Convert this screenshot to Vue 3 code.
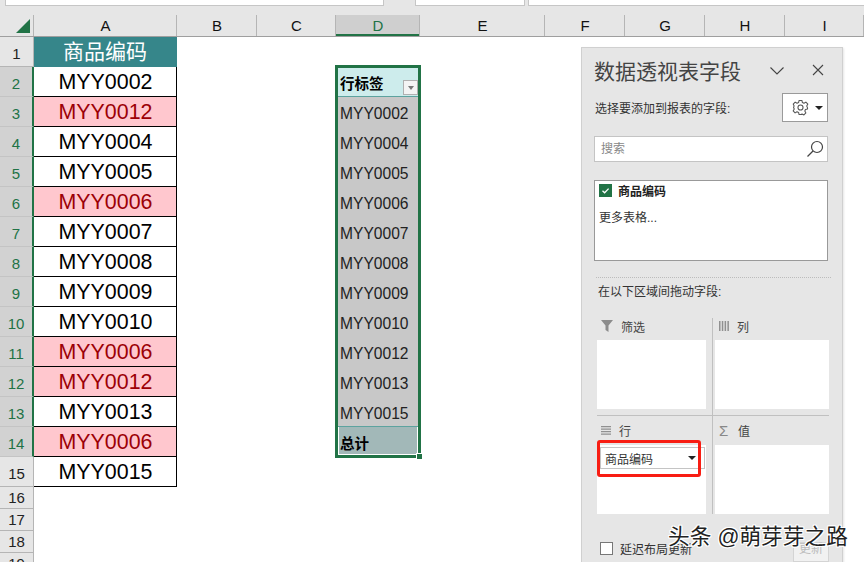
<script setup>
const columns = [
  { name: 'A', w: 143 }, { name: 'B', w: 80 }, { name: 'C', w: 79 }, { name: 'D', w: 84, active: true },
  { name: 'E', w: 125 }, { name: 'F', w: 80 }, { name: 'G', w: 80 }, { name: 'H', w: 80 }, { name: 'I', w: 79 }
]
const rowNumbers = Array.from({ length: 19 }, (_, i) => i + 1)
const codes = [
  ['MYY0002'], ['MYY0012', 1], ['MYY0004'], ['MYY0005'], ['MYY0006', 1], ['MYY0007'], ['MYY0008'],
  ['MYY0009'], ['MYY0010'], ['MYY0006', 1], ['MYY0012', 1], ['MYY0013'], ['MYY0006', 1], ['MYY0015']
]
const pivotRows = ['MYY0002', 'MYY0004', 'MYY0005', 'MYY0006', 'MYY0007', 'MYY0008', 'MYY0009', 'MYY0010', 'MYY0012', 'MYY0013', 'MYY0015']
</script>

<template>
  <div class="app">
    <div class="formula">
      <div class="fbox fb1"></div>
      <div class="fbox fb2"></div>
      <div class="fbox fb3"></div>
    </div>
    <div class="headers">
      <div class="corner"><span class="tri"></span></div>
      <div v-for="c in columns" :key="c.name" class="colh" :class="{ active: c.active }" :style="{ width: c.w + 'px' }">{{ c.name }}</div>
    </div>
    <div class="sheet">
      <div v-for="n in rowNumbers" :key="n" class="rowh" :class="{ sel: n >= 2 && n <= 14, tall: n <= 15 }" :style="{ gridRow: n }">{{ n }}</div>
      <div class="cell head">商品编码</div>
      <div v-for="(c, i) in codes" :key="i" class="cell" :class="{ dup: c[1] }" :style="{ gridRow: i + 2 }">{{ c[0] }}</div>

      <div class="pivot">
        <div class="pv phead"><b>行标签</b><span class="fbtn"><i></i></span></div>
        <div v-for="(p, i) in pivotRows" :key="i" class="pv prow">{{ p }}</div>
        <div class="pv ptotal"><b>总计</b></div>
        <span class="handle"></span>
      </div>

      <aside class="panel">
        <div class="ptitle">
          <span>数据透视表字段</span>
          <svg class="chev" width="16" height="10" viewBox="0 0 16 10"><path d="M1.5 1.5 8 8l6.5-6.5" fill="none" stroke="#444" stroke-width="1.1"/></svg>
          <svg class="close" width="12" height="12" viewBox="0 0 12 12"><path d="M1 1l10 10M11 1 1 11" fill="none" stroke="#444" stroke-width="1.1"/></svg>
        </div>
        <div class="choose">
          <span>选择要添加到报表的字段:</span>
          <div class="gear">
            <svg width="17" height="17" viewBox="0 0 24 24"><path d="M10 2h4l.7 3 2.2 1 2.7-1.600 2.800 2.800L20.800 10l1 2.200 0 0L22 14l-3 .9-.9 2.100 1.500 2.700-2.800 2.800L14.100 21 14 22h-4l-.7-3-2.200-1-2.700 1.600-2.800-2.800L3.200 14l-1-2 .8-2.200L1.700 7.200l2.800-2.800L7.100 6l2.200-1z" fill="none" stroke="#555" stroke-width="1.500" stroke-linejoin="round"/><circle cx="12" cy="12" r="3.600" fill="none" stroke="#555" stroke-width="1.500"/></svg>
            <i class="caret"></i>
          </div>
        </div>
        <div class="search">
          <span>搜索</span>
          <svg width="18" height="18" viewBox="0 0 18 18"><circle cx="11" cy="7" r="5.500" fill="none" stroke="#444" stroke-width="1.200"/><path d="M7 11l-5.500 5.500" stroke="#444" stroke-width="1.300"/></svg>
        </div>
        <div class="fields">
          <div class="fieldrow">
            <span class="check"><svg width="13" height="13" viewBox="0 0 13 13"><path d="M3.500 6.800 5.600 8.800 9.600 4.600" fill="none" stroke="#fff" stroke-width="1.300"/></svg></span>
            <b>商品编码</b>
          </div>
          <div class="more">更多表格...</div>
        </div>
        <div class="dots"></div>
        <div class="drag">在以下区域间拖动字段:</div>
        <div class="areas">
          <section class="area a-filter">
            <div class="alabel">
              <svg width="12" height="12" viewBox="0 0 12 12"><path d="M0 0h12L7.500 5.500V12L4.500 10V5.500z" fill="#8c8c8c"/></svg>
              <span>筛选</span>
            </div>
            <div class="well"></div>
          </section>
          <section class="area a-col">
            <div class="alabel">
              <svg width="10" height="10" viewBox="0 0 10 10"><path d="M0 0h1.500v10H0zM2.800 0h1.500v10H2.800zM5.600 0h1.500v10H5.600zM8.400 0h1.500v10H8.400z" fill="#909090"/></svg>
              <span>列</span>
            </div>
            <div class="well"></div>
          </section>
          <section class="area a-row">
            <div class="alabel">
              <svg width="10" height="9" viewBox="0 0 10 9"><path d="M0 0h10v1.300H0zM0 2.500h10v1.300H0zM0 5h10v1.300H0zM0 7.500h10v1.300H0z" fill="#909090"/></svg>
              <span>行</span>
            </div>
            <div class="well">
              <div class="chip"><span>商品编码</span><i class="caret"></i></div>
              <div class="redbox"></div>
            </div>
          </section>
          <section class="area a-val">
            <div class="alabel">
              <span class="sigma">Σ</span>
              <span>值</span>
            </div>
            <div class="well"></div>
          </section>
        </div>
        <div class="foot">
          <span class="box"></span>
          <span class="late">延迟布局更新</span>
          <span class="update">更新</span>
        </div>
      </aside>
    </div>
    <div class="mark">头条 @萌芽芽之路</div>
  </div>
</template>

<style>
html, body { margin: 0; background: #fff; overflow: hidden; }
</style>

<style scoped>
.app {
  position: relative;
  width: 864px;
  height: 562px;
  overflow: hidden;
  background: #fff;
  color: #000;
  font-family: "Liberation Sans", "Noto Sans CJK SC", sans-serif;
}
.formula {
  height: 15px;
  box-sizing: border-box;
  background: #e6e6e6;
  display: flex;
}
.fbox {
  height: 5px;
  background: #fff;
  border: 1px solid #c6c6c6;
  border-top: 0;
}
.fb1 { margin-left: 5px; width: 377px; }
.fb2 { margin-left: 31px; width: 108px; }
.fb3 { margin-left: 3px; flex: 1; margin-right: -2px; }
.headers {
  height: 22px;
  display: flex;
  background: #e6e6e6;
  border-bottom: 1px solid #9f9f9f;
  box-sizing: border-box;
}
.corner {
  width: 34px;
  flex: none;
  box-sizing: border-box;
  border-right: 1px solid #b5b5b5;
  position: relative;
}
.tri {
  position: absolute;
  right: 3px;
  bottom: 3px;
  width: 0;
  height: 0;
  border-left: 14px solid transparent;
  border-bottom: 14px solid #217346;
}
.colh {
  flex: none;
  box-sizing: border-box;
  border-right: 1px solid #b5b5b5;
  font-size: 15px;
  line-height: 21px;
  text-align: center;
  padding-left: 1px;
  color: #111;
}
.colh.active {
  background: #cfcfcf;
  color: #217346;
  box-shadow: inset 0 -2px 0 #217346;
}
.sheet {
  display: grid;
  grid-template-columns: 34px 143px 80px 79px 84px 1fr;
  grid-template-rows: repeat(15, 30px) repeat(4, 22px);
  position: relative;
}
.rowh {
  grid-column: 1;
  background: #e6e6e6;
  border-bottom: 1px solid #b5b5b5;
  border-right: 1px solid #b5b5b5;
  box-sizing: border-box;
  font-size: 15px;
  display: flex;
  align-items: flex-end;
  justify-content: center;
  padding-bottom: 2px;
  color: #222;
}
.rowh.tall { padding-bottom: 4px; }
.rowh.sel {
  background: #d2d2d2;
  color: #217346;
  border-bottom-color: #c4c4c4;
  border-right: 2px solid #217346;
}
.cell {
  grid-column: 2;
  box-sizing: border-box;
  border: 1px solid #000;
  border-top: 0;
  border-left: 0;
  font-size: 21.400px;
  display: flex;
  align-items: center;
  justify-content: center;
  padding: 1px 0 0 1px;
}
.cell.head {
  grid-row: 1;
  background: #36868a;
  color: #fff;
  border: 0;
  font-size: 21px;
  padding: 0 1px 4px 0;
}
.cell.dup { background: #ffc7ce; color: #9c0006; }
.pivot {
  grid-column: 5;
  grid-row: 2 / 15;
  margin: -2px -1px 0 -1px;
  border: 3px solid #217346;
  box-sizing: border-box;
  display: flex;
  flex-direction: column;
  position: relative;
  height: 393px;
}
.pv {
  flex: none;
  height: 30px;
  box-sizing: border-box;
  display: flex;
  align-items: center;
  padding-left: 2px;
  padding-top: 3px;
  font-size: 15.600px;
  color: #222;
}
.phead {
  background: #cdecec;
  height: 29px;
  border-bottom: 1px solid #5da39f;
  font-size: 14.500px;
  padding-top: 1px;
  position: relative;
  color: #000;
}
.fbtn {
  position: absolute;
  right: 0;
  bottom: 1px;
  width: 15px;
  height: 15px;
  box-sizing: border-box;
  border: 1px solid #b0b0b0;
  background: #f4f4f4;
  display: flex;
  align-items: center;
  justify-content: center;
}
.fbtn i {
  width: 0;
  height: 0;
  border: 3.500px solid transparent;
  border-top: 4px solid #777;
  border-bottom: 0;
}
.prow { background: #c8c8c8; }
.ptotal {
  background: #a2b8b8;
  margin-top: -1px;
  border-top: 1px solid #5da39f;
  height: 29px;
  font-size: 14.500px;
  padding-top: 2px;
  color: #000;
  box-shadow: inset 1px 0 #fff, inset -1px 0 #fff, inset 0 -1px #fff;
}
.handle {
  position: absolute;
  right: -5px;
  bottom: -5px;
  width: 5px;
  height: 5px;
  background: #217346;
  border: 1px solid #fff;
}
.panel {
  position: absolute;
  left: 581px;
  top: 10px;
  width: 262px;
  height: 530px;
  box-sizing: border-box;
  background: #e6e6e6;
  border: 1px solid #d0d0d0;
  box-shadow: 1px 1px 2px rgba(0, 0, 0, 0.1);
  padding: 0 0 0 12px;
  display: flex;
  flex-direction: column;
  color: #333;
  font-size: 12px;
}
.ptitle {
  display: flex;
  align-items: center;
  height: 26px;
  margin: 9px 0 0;
  font-size: 21px;
  color: #444;
  position: relative;
}
.chev { position: absolute; left: 175px; top: 9px; }
.close { position: absolute; left: 218px; top: 7px; }
.choose {
  display: flex;
  align-items: center;
  justify-content: space-between;
  height: 29px;
  margin: 10px 14px 0 1px;
}
.gear {
  width: 46px;
  height: 29px;
  box-sizing: border-box;
  background: #fff;
  border: 1px solid #9a9a9a;
  display: flex;
  align-items: center;
  padding-left: 9px;
  gap: 6px;
}
.caret {
  width: 0;
  height: 0;
  border: 4px solid transparent;
  border-top: 4px solid #222;
  border-bottom: 0;
}
.search {
  height: 26px;
  margin: 14px 14px 0 0;
  box-sizing: border-box;
  background: #fff;
  border: 1px solid #c4c4c4;
  display: flex;
  align-items: center;
  justify-content: space-between;
  padding: 0 3px 0 6px;
  color: #888;
}
.search span { margin-bottom: 4px; }
.fields {
  height: 81px;
  margin: 18px 14px 0 0;
  box-sizing: border-box;
  background: #fff;
  border: 1px solid #999;
  padding: 3px 0 0 4px;
}
.fieldrow { display: flex; align-items: center; gap: 6px; height: 13px; color: #222; }
.check {
  width: 13px;
  height: 13px;
  background: #217346;
  display: block;
}
.check svg { display: block; }
.more { margin-top: 11px; color: #333; }
.dots {
  margin: 16px 11px 0 2px;
  border-top: 1px dotted #bcbcbc;
}
.drag { margin: 6px 0 0 4px; line-height: 16px; }
.areas {
  margin: 18px 0 0 3px;
  display: grid;
  grid-template-columns: 116px 116px;
  grid-template-rows: 98px 98px;
  position: relative;
}
.area { display: flex; flex-direction: column; }
.a-filter, .a-row { border-right: 1px solid #c0c0c0; }
.a-filter, .a-col { border-bottom: 1px solid #c0c0c0; }
.a-col, .a-val { padding-left: 2px; }
.alabel {
  height: 22px;
  box-sizing: border-box;
  padding: 0 0 6px 4px;
  display: flex;
  align-items: center;
  gap: 8px;
  color: #444;
  flex: none;
}
.a-val .alabel { gap: 9px; }
.a-row .alabel, .a-val .alabel { height: 29px; padding-bottom: 0; }
.sigma { font-size: 15px; color: #888; width: 10px; }
.well {
  background: #fff;
  height: 69px;
  position: relative;
}
.a-filter .well, .a-row .well { margin-right: 6px; }
.chip {
  position: absolute;
  left: 3px;
  top: 2px;
  width: 105px;
  height: 22px;
  box-sizing: border-box;
  background: #fff;
  border: 1px solid #c4c4c4;
  display: flex;
  align-items: center;
  justify-content: space-between;
  padding: 0 8px 0 4px;
  color: #333;
}
.redbox {
  position: absolute;
  left: 0;
  top: -5px;
  width: 104px;
  height: 37px;
  box-sizing: border-box;
  border: 3px solid #f81d13;
  border-radius: 3px;
}
.foot {
  display: flex;
  align-items: center;
  margin: 24px 0 0 6px;
  position: relative;
  height: 20px;
}
.box {
  width: 13px;
  height: 13px;
  box-sizing: border-box;
  background: #fff;
  border: 1px solid #777;
  margin-right: 7px;
}
.update {
  position: absolute;
  left: 193px;
  top: 4px;
  width: 36px;
  height: 20px;
  box-sizing: border-box;
  background: #f1f1f1;
  border: 1px solid #d4d4d4;
  color: #bbb;
  line-height: 12px;
  text-align: center;
}
.mark {
  position: absolute;
  left: 668px;
  top: 522px;
  font-size: 21.700px;
  line-height: 30px;
  white-space: nowrap;
  color: #222;
  text-shadow: 1px 0 0 #fff, -1px 0 0 #fff, 0 1px 0 #fff, 0 -1px 0 #fff, 1px 1px 0 #fff, -1px -1px 0 #fff, 1px -1px 0 #fff, -1px 1px 0 #fff;
}
</style>
